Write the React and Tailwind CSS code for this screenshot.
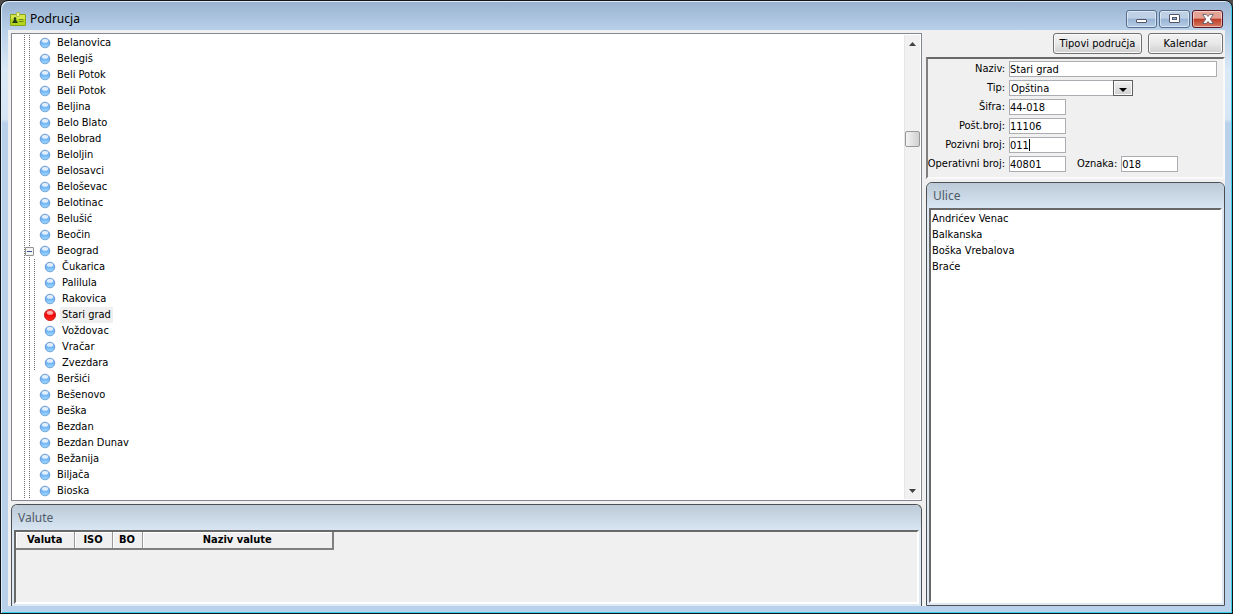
const towns = [
  'Belanovica', 'Belegiš', 'Beli Potok', 'Beli Potok', 'Beljina', 'Belo Blato', 'Belobrad',
  'Beloljin', 'Belosavci', 'Beloševac', 'Belotinac', 'Belušić', 'Beočin',
  {
    name: 'Beograd',
    children: ['Čukarica', 'Palilula', 'Rakovica', 'Stari grad', 'Voždovac', 'Vračar', 'Zvezdara'],
  },
  'Beršići', 'Bešenovo', 'Beška', 'Bezdan', 'Bezdan Dunav', 'Bežanija', 'Biljača', 'Bioska',
]

const streets = ['Andrićev Venac', 'Balkanska', 'Boška Vrebalova', 'Braće']

const columns = [
  { label: 'Valuta', width: 'w-[58px]' },
  { label: 'ISO', width: 'w-[38px]' },
  { label: 'BO', width: 'w-[30px]' },
  { label: 'Naziv valute', width: 'w-[191px]' },
]

const fieldClass = 'h-4 border border-[#abadb3] bg-white pt-px outline-none'

function Gradients() {
  return (
    <svg className="absolute size-0" aria-hidden="true">
      <defs>
        <linearGradient id="blue" x1="0" y1="0" x2="0" y2="1">
          <stop offset="0" stopColor="#a9cdf5" />
          <stop offset="0.5" stopColor="#6fb2f6" />
          <stop offset="1" stopColor="#a4e2ff" />
        </linearGradient>
        <linearGradient id="red" x1="0" y1="0" x2="0" y2="1">
          <stop offset="0" stopColor="#ff5a50" />
          <stop offset="0.5" stopColor="#f00808" />
          <stop offset="1" stopColor="#ff2a20" />
        </linearGradient>
      </defs>
    </svg>
  )
}

function Ball({ red = false }) {
  return (
    <svg width="12" height="12" viewBox="0 0 12 12" className="shrink-0">
      <circle cx="6" cy="6" r={red ? 5.6 : 4.8} fill={red ? 'url(#red)' : 'url(#blue)'} stroke={red ? '#b81414' : '#5b8fcb'} strokeWidth="0.8" />
      <ellipse cx="6" cy="3.9" rx="3" ry="1.9" fill="#fff" opacity={red ? 0.65 : 0.75} />
    </svg>
  )
}

function DottedLine() {
  return <span className="w-px shrink-0 self-stretch bg-[repeating-linear-gradient(#707070_0_1px,transparent_1px_2px)]" />
}

function TreeRow({ name, child = false, expandable = false }) {
  const selected = name === 'Stari grad'
  return (
    <div className="relative flex h-4 items-center gap-1 pl-3">
      <DottedLine />
      <DottedLine />
      {child && <DottedLine />}
      {expandable && (
        <button aria-label="Skupi" className="absolute left-[13px] flex size-[9px] items-center justify-center rounded-[1px] border border-[#919191] bg-[#f4f4f4]">
          <span className="h-px w-[5px] bg-[#3b559b]" />
        </button>
      )}
      <span className="ml-[5px] flex items-center">
        <Ball red={selected} />
        <span className={`ml-1 px-[2px] leading-4 ${selected ? 'bg-[#efefef]' : ''}`}>{name}</span>
      </span>
    </div>
  )
}

function Arrow({ up = false }) {
  return (
    <svg width="7" height="4" viewBox="0 0 7 4">
      <path d={up ? 'M0 4 3.5 0 7 4Z' : 'M0 0 3.5 4 7 0Z'} fill="#404040" />
    </svg>
  )
}

function Scrollbar() {
  return (
    <div className="flex w-4 shrink-0 flex-col items-center border-l border-[#e6e6e6] bg-[#f1f1f1]">
      <button aria-label="Gore" className="flex h-[17px] w-full items-center justify-center"><Arrow up /></button>
      <div className="h-[17%] w-full" />
      <div className="h-4 w-full rounded-xs border border-[#979797] bg-linear-to-r from-[#f4f4f4] to-[#cfcfd1]" />
      <div className="flex-1" />
      <button aria-label="Dole" className="flex h-[17px] w-full items-center justify-center"><Arrow /></button>
    </div>
  )
}

function Tree() {
  return (
    <div className="flex min-h-0 flex-1 border border-[#828790] bg-white py-px pr-px">
      <ul className="min-w-0 flex-1 overflow-hidden">
        {towns.map((town, i) => {
          const name = town.name || town
          return (
            <li key={i}>
              <TreeRow name={name} expandable={!!town.children} />
              {town.children && (
                <ul>
                  {town.children.map((c) => <li key={c}><TreeRow name={c} child /></li>)}
                </ul>
              )}
            </li>
          )
        })}
      </ul>
      <Scrollbar />
    </div>
  )
}

function Panel({ title, open = false, className, children }) {
  return (
    <section className={`flex flex-col rounded-t-md border border-[#4c4f53] bg-[#dfe9f4] px-[2px] pb-[2px] ${open ? 'border-b-0' : ''} ${className}`}>
      <h2 className="-mx-[2px] h-[25px] shrink-0 rounded-t-md bg-linear-to-b from-[#bccad8] to-[#d8e5f2] pl-[6px] font-['Noto_Sans',sans-serif] text-xs leading-[26px] text-[#4e5a66]">{title}</h2>
      <div className="min-h-0 flex-1 border-2 border-t-[#696969] border-r-white border-b-white border-l-[#696969] bg-[#f0f0f0]">{children}</div>
    </section>
  )
}

function Field({ id, label, value, className = 'w-[57px]', caret = false }) {
  return (
    <>
      <label htmlFor={id} className="text-right whitespace-nowrap">{label}</label>
      <span className="relative flex">
        <input id={id} defaultValue={value} className={`${fieldClass} ${className}`} />
        {caret && <span className="absolute top-[2px] left-5 h-3 w-px bg-black" />}
      </span>
    </>
  )
}

function Form() {
  return (
    <form className="mt-[3px] grid h-[122px] shrink-0 grid-cols-[77px_1fr] content-start items-center gap-x-1 gap-y-[3px] border-2 border-t-[#696969] border-r-[#fafafa] border-b-[#fafafa] border-l-[#808080] pt-[2px] pr-[6px]">
      <Field id="naziv" label="Naziv:" value="Stari grad" className="w-full" />
      <label htmlFor="tip" className="text-right">Tip:</label>
      <span className="relative flex w-[124px]">
        <select id="tip" className="h-4 w-full appearance-none border border-[#abadb3] bg-white pl-[1px] outline-none">
          <option>Opština</option>
        </select>
        <span className="pointer-events-none absolute top-0 right-0 flex h-4 w-5 items-center justify-center border border-[#606060] bg-linear-to-b from-[#f2f2f2] to-[#cfcfcf] pt-1 shadow-[inset_0_0_0_1px_#fafafa]">
          <svg width="8" height="4" viewBox="0 0 8 4"><path d="M0 0H8L4 4Z" fill="#000" /></svg>
        </span>
      </span>
      <Field id="sifra" label="Šifra:" value="44-018" />
      <Field id="posta" label="Pošt.broj:" value="11106" />
      <Field id="pozivni" label="Pozivni broj:" value="011" caret />
      <label htmlFor="operativni" className="flex justify-end whitespace-nowrap">Operativni broj:</label>
      <span className="flex items-center">
        <input id="operativni" defaultValue="40801" className={`${fieldClass} w-[57px]`} />
        <label htmlFor="oznaka" className="mr-1 ml-[11px]">Oznaka:</label>
        <input id="oznaka" defaultValue="018" className={`${fieldClass} w-[57px]`} />
      </span>
    </form>
  )
}

function ToolButton({ className, children }) {
  return (
    <button className={`h-[21px] rounded-[3px] border border-[#707070] bg-linear-to-b from-[#f3f3f3] via-[#e8e8e8] to-[#cfcfcf] shadow-[inset_0_0_0_1px_#fbfbfb] ${className}`}>
      {children}
    </button>
  )
}

const captionClass = 'flex h-[18px] w-[31px] items-center justify-center rounded-[3px] border shadow-[inset_0_0_0_1px_#ffffff80]'

function TitleBar() {
  return (
    <header className="flex h-7 shrink-0 items-center pt-[5px] pr-[2px] pl-[2px]">
      <svg width="16" height="14" viewBox="0 0 16 14">
        <rect x="0.5" y="2.5" width="15" height="11" rx="0.5" fill="#b5d51c" stroke="#88a318" />
        <path d="M1 3h14v4H1z" fill="#e2ee62" opacity="0.7" />
        <path d="M6.5 0.5h3v4h-3z" fill="#e9f39a" stroke="#a3b73d" strokeWidth="0.8" />
        <circle cx="5" cy="6.6" r="1.3" fill="#1e3a1a" />
        <path d="M2 10.9 4.2 7.6h1.6l2.2 3.3Z" fill="#1e3a1a" />
        <path d="M9 7.5h4.500M9 9.500h4.500" stroke="#6d8a1c" />
      </svg>
      <h1 className="ml-1 flex-1 font-['Noto_Sans',sans-serif] text-xs text-black">Podrucja</h1>
      <div className="flex gap-[2px]">
        <button aria-label="Umanji" className={`${captionClass} border-[#566f8e] bg-linear-to-b from-[#bdd0e6] from-45% via-[#98b4d4] via-50% to-[#b4cce6]`}>
          <svg width="11" height="11" viewBox="0 0 11 11"><rect x="0.5" y="6.5" width="10" height="3" rx="0.5" fill="#fff" stroke="#535666" /></svg>
        </button>
        <button aria-label="Uvećaj" className={`${captionClass} border-[#566f8e] bg-linear-to-b from-[#bdd0e6] from-45% via-[#98b4d4] via-50% to-[#b4cce6]`}>
          <svg width="11" height="9" viewBox="0 0 11 9">
            <rect x="0.5" y="0.5" width="10" height="8" rx="0.5" fill="#fff" stroke="#535666" />
            <rect x="3.5" y="3.5" width="4" height="2" fill="#98b4d4" stroke="#535666" />
          </svg>
        </button>
        <button aria-label="Zatvori" className={`${captionClass} border-[#5a1522] bg-linear-to-b from-[#e3a293] from-45% via-[#bd3a26] via-50% to-[#d67a60]`}>
          <svg width="12" height="10" viewBox="0 0 12 10">
            <path d="M0.7 0.5H4.200L6 2.500 7.800 0.500H11.300L8.200 5 11.300 9.500H7.800L6 7.500 4.200 9.500H0.700L3.800 5Z" fill="#fff" stroke="#535666" strokeWidth="0.8" />
          </svg>
        </button>
      </div>
    </header>
  )
}

export default function App() {
  return (
    <div className="h-screen bg-[#504c4c] font-['DejaVu_Sans_Condensed','DejaVu_Sans',sans-serif] text-[11px] leading-4 text-black">
      <Gradients />
      <div className="flex h-full flex-col rounded-t-lg border border-[#101418] bg-[linear-gradient(#98b1cf_0,#b7cfe8_28px,#dbe9f6_70px,#d6e6f5_118px,#b9d1ea_122px)] px-[7px] pt-px pb-[7px] shadow-[inset_1px_1px_0_#dcecf8,inset_-1px_-1px_0_#35cfe8]">
        <TitleBar />
        <main className="flex min-h-0 flex-1 gap-1 bg-[#f0f0f0] pt-[3px] pl-[3px]">
          <div className="flex min-w-0 flex-1 flex-col gap-[3px]">
            <Tree />
            <Panel title="Valute" open className="h-[102px] shrink-0">
              <table className="table-fixed border-r-2 border-b-2 border-[#808080]">
                <thead>
                  <tr>
                    {columns.map((c) => (
                      <th key={c.label} className={`${c.width} h-[17px] border-r border-r-[#989898] p-0 leading-4 shadow-[inset_1px_1px_0_#fff] last:border-r-0`}>{c.label}</th>
                    ))}
                  </tr>
                </thead>
              </table>
            </Panel>
          </div>
          <div className="flex w-[299px] shrink-0 flex-col">
            <div className="flex justify-end gap-[6px] pr-[2px]">
              <ToolButton className="w-[89px]">Tipovi područja</ToolButton>
              <ToolButton className="w-[75px]">Kalendar</ToolButton>
            </div>
            <Form />
            <Panel title="Ulice" className="mt-[3px] min-h-0 flex-1">
              <ul className="h-full bg-white pt-px pl-px">
                {streets.map((s) => <li key={s}>{s}</li>)}
              </ul>
            </Panel>
          </div>
        </main>
      </div>
    </div>
  )
}
